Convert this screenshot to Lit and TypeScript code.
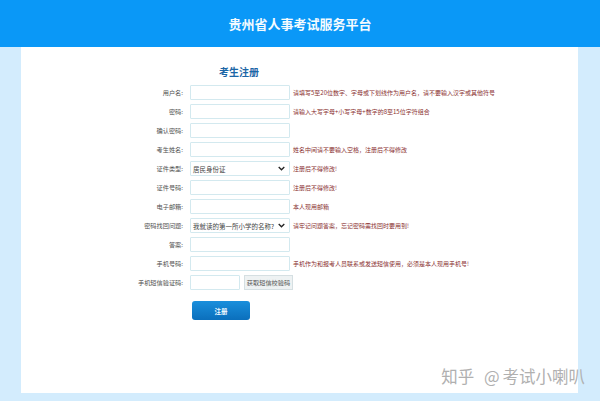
import { LitElement, html, css } from "lit";
import { customElement } from "lit/decorators.js";

interface Row { label: string; kind: "input" | "select" | "code"; hint?: string; value?: string; }

const rows: Row[] = [
  { label: "用户名:", kind: "input", hint: "请填写5至20位数字、字母或下划线作为用户名\uFF0C请不要输入汉字或其他符号" },
  { label: "密码:", kind: "input", hint: "请输入大写字母+小写字母+数字的8至15位字符组合" },
  { label: "确认密码:", kind: "input" },
  { label: "考生姓名:", kind: "input", hint: "姓名中间请不要输入空格\uFF0C注册后不得修改" },
  { label: "证件类型:", kind: "select", value: "居民身份证", hint: "注册后不得修改!" },
  { label: "证件号码:", kind: "input", hint: "注册后不得修改!" },
  { label: "电子邮箱:", kind: "input", hint: "本人现用邮箱" },
  { label: "密码找回问题:", kind: "select", value: "我就读的第一所小学的名称?", hint: "请牢记问题答案\uFF0C忘记密码需找回时要用到!" },
  { label: "答案:", kind: "input" },
  { label: "手机号码:", kind: "input", hint: "手机作为和报考人员联系或发送短信使用\uFF0C必须是本人现用手机号!" },
  { label: "手机短信验证码:", kind: "code" },
];

@customElement("app-root")
export class AppRoot extends LitElement {
  static styles = css`
    :host {
      display: flex;
      flex-direction: column;
      width: 600px;
      height: 401px;
      overflow: hidden;
      background: #d3ecfd;
      font-family: "Noto Sans CJK SC", "Liberation Sans", sans-serif;
    }
    .top {
      height: 47px;
      flex: none;
      background: #0a98f7;
      color: #f4fbff;
      display: flex;
      align-items: center;
      justify-content: center;
      font-size: 13px;
      font-weight: 700;
      padding-bottom: 1px;
      box-sizing: border-box;
    }
    .card {
      position: relative;
      margin: 0 22px 8px 21px;
      flex: 1;
      background: #fff;
      padding-top: 18px;
      box-sizing: border-box;
    }
    h1 {
      margin: 0 0 4px 198px;
      width: 42px;
      font-size: 10px;
      line-height: 14px;
      font-weight: 700;
      color: #1b66a6;
      white-space: nowrap;
    }
    .row {
      display: grid;
      grid-template-columns: 130px 100px auto;
      column-gap: 7px;
      height: 19px;
      align-items: center;
      margin-left: 32px;
    }
    .label {
      text-align: right;
      font-size: 6.2px;
      color: #505050;
      white-space: nowrap;
    }
    .field {
      box-sizing: border-box;
      height: 15px;
      width: 100px;
      border: 1px solid #d3e9ef;
      border-radius: 1px;
      background: #fff;
    }
    .select {
      display: flex;
      align-items: center;
      justify-content: space-between;
      padding: 0 4px 0 2px;
      font-size: 6.5px;
      color: #444;
      white-space: nowrap;
      overflow: hidden;
    }
    .select svg { flex: none; }
    .hint {
      font-size: 6px;
      color: #8a3030;
      white-space: nowrap;
      margin-left: -4px;
    }
    .code {
      display: flex;
      gap: 4px;
      align-items: center;
    }
    .code .field { width: 50px; flex: none; }
    .send {
      box-sizing: border-box;
      width: 49px;
      height: 15px;
      flex: none;
      background: #eef2f3;
      border: 1px solid #d5dfe2;
      font-size: 6.2px;
      color: #555;
      display: flex;
      align-items: center;
      justify-content: center;
      white-space: nowrap;
    }
    .submit {
      display: flex;
      align-items: center;
      justify-content: center;
      margin: 9px 0 0 171px;
      width: 58px;
      height: 19px;
      border-radius: 3px;
      background: linear-gradient(#1a8fdc, #0b6fbc);
      color: #f2f9ff;
      font-size: 6.5px;
      font-weight: 700;
    }
    .mark {
      position: absolute;
      right: -7px;
      bottom: 8px;
      font-size: 16.5px;
      line-height: 18px;
      color: #b0b0b0;
      white-space: nowrap;
      word-spacing: 6px;
    }
    .at { margin-right: 3px; }
  `;

  private chevron() {
    return html`<svg width="7" height="5" viewBox="0 0 7 5"><path d="M.7 1l2.8 2.8L6.3 1" fill="none" stroke="#222" stroke-width="1.3"/></svg>`;
  }

  private renderField(r: Row) {
    if (r.kind === "select")
      return html`<div class="field select"><span>${r.value}</span>${this.chevron()}</div>`;
    if (r.kind === "code")
      return html`<div class="code"><div class="field"></div><div class="send">获取短信校验码</div></div>`;
    return html`<div class="field"></div>`;
  }

  render() {
    return html`
      <div class="top">贵州省人事考试服务平台</div>
      <div class="card">
        <h1>考生注册</h1>
        ${rows.map(r => html`
          <div class="row">
            <div class="label">${r.label}</div>
            ${this.renderField(r)}
            ${r.hint ? html`<div class="hint">${r.hint}</div>` : html`<div></div>`}
          </div>`)}
        <div class="submit">注册</div>
        <div class="mark">知乎 <span class="at">@</span>考试小喇叭</div>
      </div>
    `;
  }
}
